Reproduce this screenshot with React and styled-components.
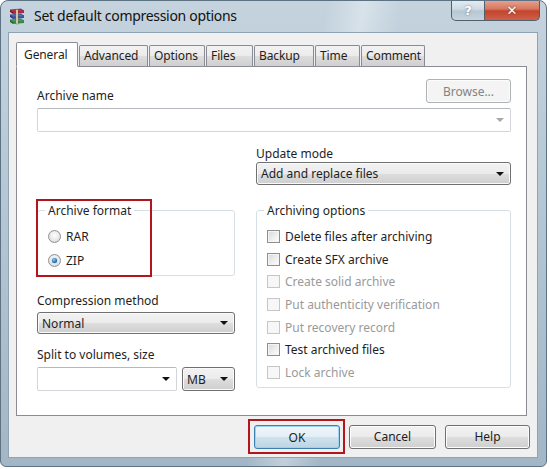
import React from 'react';
import styled, { createGlobalStyle } from 'styled-components';

const GlobalStyle = createGlobalStyle`
  html, body {
    margin: 0;
    padding: 0;
    background: #ffffff;
  }
  body {
    font-family: "Noto Sans", "Open Sans", sans-serif;
    font-size: 12px;
    color: #1e1e1e;
  }
`;

const Window = styled.div`
  width: 547px;
  height: 467px;
  box-sizing: border-box;
  border: 1px solid #5d7283;
  border-radius: 8px 8px 6px 6px;
  background:
    linear-gradient(100deg, transparent 52%, rgba(255, 255, 255, 0.35) 58%, transparent 64%),
    linear-gradient(180deg, #c4d3de 0%, #afc2d0 60%, #a2b6c6 100%);
  padding: 0 8px 8px 7px;
  display: flex;
  flex-direction: column;
  position: relative;
  overflow: hidden;
`;

const TitleBar = styled.div`
  height: 32px;
  display: flex;
  align-items: center;
  gap: 8px;
`;

const Title = styled.span`
  font-size: 14px;
  color: #111;
  letter-spacing: -0.3px;
  padding-bottom: 2px;
`;

const CaptionButtons = styled.div`
  position: absolute;
  top: -1px;
  right: 6px;
  display: flex;
`;

const CaptionButton = styled.div`
  height: 21px;
  width: ${(p) => p.$w}px;
  box-sizing: border-box;
  border: 1px solid #52606b;
  border-top: none;
  display: flex;
  align-items: center;
  justify-content: center;
  color: #fff;
  font-weight: bold;
  font-family: "DejaVu Sans", sans-serif;
  font-size: 13px;
  background: ${(p) =>
    p.$close
      ? 'linear-gradient(180deg, #e8a493 0%, #d7765f 45%, #c2452c 55%, #d0604a 100%)'
      : 'linear-gradient(180deg, #e4ecf2 0%, #cfdbe4 45%, #b7c7d3 55%, #c6d4de 100%)'};
  border-radius: ${(p) => (p.$close ? '0 0 5px 0' : '0 0 0 5px')};
  border-left: ${(p) => (p.$close ? 'none' : '1px solid #52606b')};
  text-shadow: 0 0 2px rgba(0, 0, 0, 0.5);
`;

const Client = styled.div`
  flex: 1;
  background: #f0f0f0;
  border: 1px solid #8fa3b2;
  display: flex;
  flex-direction: column;
  padding: 8px 10px 0 7px;
`;

const TabStrip = styled.div`
  display: flex;
  align-items: flex-end;
  height: 25px;
  gap: 1px;
  position: relative;
  z-index: 1;
`;

const Tab = styled.div`
  width: ${(p) => p.$w}px;
  height: ${(p) => (p.$active ? 25 : 21)}px;
  box-sizing: border-box;
  padding-left: ${(p) => (p.$active ? 7 : 4)}px;
  border: 1px solid #898c95;
  border-bottom: ${(p) => (p.$active ? '1px solid #ffffff' : 'none')};
  margin-bottom: ${(p) => (p.$active ? -1 : 0)}px;
  border-radius: 2px 2px 0 0;
  background: ${(p) => (p.$active ? '#ffffff' : 'linear-gradient(180deg, #f2f2f2 0%, #ebebeb 50%, #dddddd 51%, #cfcfcf 100%)')};
  display: flex;
  align-items: center;
  line-height: 1;
  white-space: nowrap;
  letter-spacing: -0.1px;
`;

const Panel = styled.div`
  height: 350px;
  box-sizing: border-box;
  background: #ffffff;
  border: 1px solid #898c95;
  padding: 12px 15px 0 20px;
  display: flex;
  flex-direction: column;
`;

const NameRow = styled.div`
  display: flex;
  justify-content: space-between;
  align-items: flex-end;
`;

const Label = styled.div`
  line-height: 15px;
  margin-top: ${(p) => p.$mt || 0}px;
  color: #1e1e1e;
`;

const PushButton = styled.div`
  width: ${(p) => p.$w}px;
  height: 24px;
  box-sizing: border-box;
  border: 1px solid ${(p) => (p.$disabled ? '#adb2b5' : p.$default ? '#3c7fb1' : '#707070')};
  border-radius: 3px;
  display: flex;
  align-items: center;
  justify-content: center;
  color: ${(p) => (p.$disabled ? '#838383' : '#1e1e1e')};
  background: ${(p) =>
    p.$disabled
      ? '#f4f4f4'
      : p.$default
      ? 'linear-gradient(180deg, #f0f6fa 0%, #e3eef5 50%, #cfe2ee 51%, #bdd4e3 100%)'
      : 'linear-gradient(180deg, #f2f2f2 0%, #ebebeb 50%, #dddddd 51%, #cfcfcf 100%)'};
  box-shadow: ${(p) => (p.$default ? 'inset 0 0 0 1px #9ed2f2' : 'inset 0 0 0 1px #fcfcfc')};
`;

const Combo = styled.div`
  height: ${(p) => p.$h || 23}px;
  width: ${(p) => (p.$w ? `${p.$w}px` : 'auto')};
  margin-top: ${(p) => p.$mt || 0}px;
  box-sizing: border-box;
  display: flex;
  align-items: center;
  justify-content: space-between;
  padding: 0 6px 0 4px;
  border-radius: ${(p) => (p.$button ? 3 : 2)}px;
  border: 1px solid ${(p) => (p.$button ? '#707070' : '#d2d6da')};
  border-top-color: ${(p) => (p.$button ? '#707070' : '#b5b9be')};
  background: ${(p) =>
    p.$button
      ? 'linear-gradient(180deg, #f2f2f2 0%, #ebebeb 50%, #dddddd 51%, #cfcfcf 100%)'
      : '#ffffff'};
  box-shadow: ${(p) => (p.$button ? 'inset 0 0 0 1px #fafafa' : 'none')};
`;

const Arrow = styled.span`
  width: 0;
  height: 0;
  border-left: 4px solid transparent;
  border-right: 4px solid transparent;
  border-top: 4px solid ${(p) => (p.$dim ? '#a8a8a8' : '#111')};
`;

const Columns = styled.div`
  display: grid;
  grid-template-columns: 198px 255px;
  column-gap: 21px;
`;

const RightStack = styled.div`
  grid-column: 2;
  display: flex;
  flex-direction: column;
`;

const LeftStack = styled.div`
  display: flex;
  flex-direction: column;
`;

const Highlighted = styled.div`
  position: relative;
  margin-top: 18px;
`;

const RedFrame = styled.div`
  position: absolute;
  left: -1px;
  top: -4px;
  width: 116px;
  height: 78px;
  box-sizing: border-box;
  border: 2px solid #b3151c;
  pointer-events: none;
`;

const Group = styled.fieldset`
  margin: ${(p) => p.$mt || 0}px 0 0 0;
  min-width: 0;
  border: 1px solid #d5dfe5;
  border-radius: 3px;
  padding: ${(p) => p.$pad};
  display: flex;
  flex-direction: column;
  align-self: start;
`;

const Legend = styled.legend`
  padding: 0 3px;
  margin-left: -3px;
  line-height: 15px;
`;

const OptionRow = styled.div`
  height: ${(p) => p.$h}px;
  margin-top: ${(p) => p.$mt || 0}px;
  display: flex;
  align-items: center;
  gap: 5px;
  color: ${(p) => (p.$disabled ? '#9a9a9a' : '#1e1e1e')};
`;

const Radio = styled.span`
  width: 13px;
  height: 13px;
  box-sizing: border-box;
  border-radius: 50%;
  border: 1px solid #8e8f8f;
  background: radial-gradient(circle at 50% 40%, #ffffff 0%, #e6e6e6 60%, #cfcfcf 100%);
  display: flex;
  align-items: center;
  justify-content: center;
  &::after {
    content: '';
    width: 5px;
    height: 5px;
    border-radius: 50%;
    display: ${(p) => (p.$checked ? 'block' : 'none')};
    background: radial-gradient(circle at 40% 35%, #8fd0f5 0%, #1c6fb5 60%, #0d3f74 100%);
    box-shadow: 0 0 1px #2a6fa8;
  }
`;

const Check = styled.span`
  width: 13px;
  height: 13px;
  box-sizing: border-box;
  border: 1px solid ${(p) => (p.$disabled ? '#c6c6c6' : '#8e8f8f')};
  background: ${(p) => (p.$disabled ? '#f7f7f7' : 'linear-gradient(135deg, #d8d8d8 0%, #f0f0f0 60%, #ffffff 100%)')};
  box-shadow: ${(p) => (p.$disabled ? 'none' : 'inset 0 0 0 1px #f4f4f4')};
  flex-shrink: 0;
`;

const SplitRow = styled.div`
  display: flex;
  gap: 5px;
  margin-top: 5px;
`;

const ButtonRow = styled.div`
  display: flex;
  justify-content: flex-end;
  align-items: center;
  gap: 9px;
  height: 41px;
  margin-right: -3px;
`;

const RedWrap = styled.div`
  border: 2px solid #b3151c;
  padding: 4px 3px 3px 4px;
  margin-right: -5px;
`;

const RarIcon = () => (
  <svg width="18" height="18" viewBox="0 0 18 18">
    <path d="M2 2 L13 1 L16 3 L5 4 Z" fill="#c0354f" stroke="#5a1020" strokeWidth="0.6" />
    <path d="M2 2 L5 4 L5 6 L2 4 Z" fill="#7a1a2c" />
    <path d="M5 4 L16 3 L16 5 L5 6 Z" fill="#a12840" />
    <path d="M2 7 L13 6 L16 8 L5 9 Z" fill="#5a6fc0" stroke="#1d2a66" strokeWidth="0.6" />
    <path d="M2 7 L5 9 L5 11 L2 9 Z" fill="#2a3a88" />
    <path d="M5 9 L16 8 L16 10 L5 11 Z" fill="#3a4ea8" />
    <path d="M2 12 L13 11 L16 13 L5 14 Z" fill="#4aa35a" stroke="#1a5a25" strokeWidth="0.6" />
    <path d="M2 12 L5 14 L5 16 L2 14 Z" fill="#1e6a2c" />
    <path d="M5 14 L16 13 L16 15 L5 16 Z" fill="#2f8a3e" />
    <rect x="8" y="1.5" width="2" height="14.5" fill="#e8e0c0" stroke="#6a5a30" strokeWidth="0.4" />
  </svg>
);

const options = [
  { label: 'Delete files after archiving' },
  { label: 'Create SFX archive' },
  { label: 'Create solid archive', disabled: true },
  { label: 'Put authenticity verification', disabled: true },
  { label: 'Put recovery record', disabled: true },
  { label: 'Test archived files' },
  { label: 'Lock archive', disabled: true },
];

const tabs = [
  { label: 'General', w: 62 },
  { label: 'Advanced', w: 69 },
  { label: 'Options', w: 56 },
  { label: 'Files', w: 47 },
  { label: 'Backup', w: 60 },
  { label: 'Time', w: 45 },
  { label: 'Comment', w: 64 },
];

const App = () => {
  return (
    <>
      <GlobalStyle />
      <Window>
        <TitleBar>
          <RarIcon />
          <Title>Set default compression options</Title>
        </TitleBar>
        <CaptionButtons>
          <CaptionButton $w={34}>?</CaptionButton>
          <CaptionButton $w={55} $close>
            ✕
          </CaptionButton>
        </CaptionButtons>
        <Client>
          <TabStrip>
            {tabs.map((t, i) => (
              <Tab key={t.label} $w={t.w} $active={i === 0}>
                {t.label}
              </Tab>
            ))}
          </TabStrip>
          <Panel>
            <NameRow>
              <Label>Archive name</Label>
              <PushButton $w={85} $disabled>
                Browse...
              </PushButton>
            </NameRow>
            <Combo $mt={5} $h={24}>
              <span />
              <Arrow $dim />
            </Combo>
            <Columns>
              <RightStack>
                <Label $mt={14}>Update mode</Label>
                <Combo $mt={1} $button>
                  <span>Add and replace files</span>
                  <Arrow />
                </Combo>
              </RightStack>
            </Columns>
            <Columns>
              <LeftStack>
                <Highlighted>
                  <Group $pad="7px 10px 4px 10px">
                    <Legend>Archive format</Legend>
                    <OptionRow $h={22}>
                      <Radio />
                      RAR
                    </OptionRow>
                    <OptionRow $h={22} $mt={2}>
                      <Radio $checked />
                      ZIP
                    </OptionRow>
                  </Group>
                  <RedFrame />
                </Highlighted>
                <Label $mt={17}>Compression method</Label>
                <Combo $mt={4} $h={22} $button>
                  <span>Normal</span>
                  <Arrow />
                </Combo>
                <Label $mt={13}>Split to volumes, size</Label>
                <SplitRow>
                  <Combo $w={140} $h={24}>
                    <span />
                    <Arrow />
                  </Combo>
                  <Combo $w={53} $h={24} $button>
                    <span>MB</span>
                    <Arrow />
                  </Combo>
                </SplitRow>
              </LeftStack>
              <Group $pad="7px 10px 3px 10px" $mt={18}>
                <Legend>Archiving options</Legend>
                {options.map((o) => (
                  <OptionRow key={o.label} $h={22.7} $disabled={o.disabled}>
                    <Check $disabled={o.disabled} />
                    {o.label}
                  </OptionRow>
                ))}
              </Group>
            </Columns>
          </Panel>
          <ButtonRow>
            <RedWrap>
              <PushButton $w={86} $default>
                OK
              </PushButton>
            </RedWrap>
            <PushButton $w={87}>Cancel</PushButton>
            <PushButton $w={85}>Help</PushButton>
          </ButtonRow>
        </Client>
      </Window>
    </>
  );
};

export default App;
